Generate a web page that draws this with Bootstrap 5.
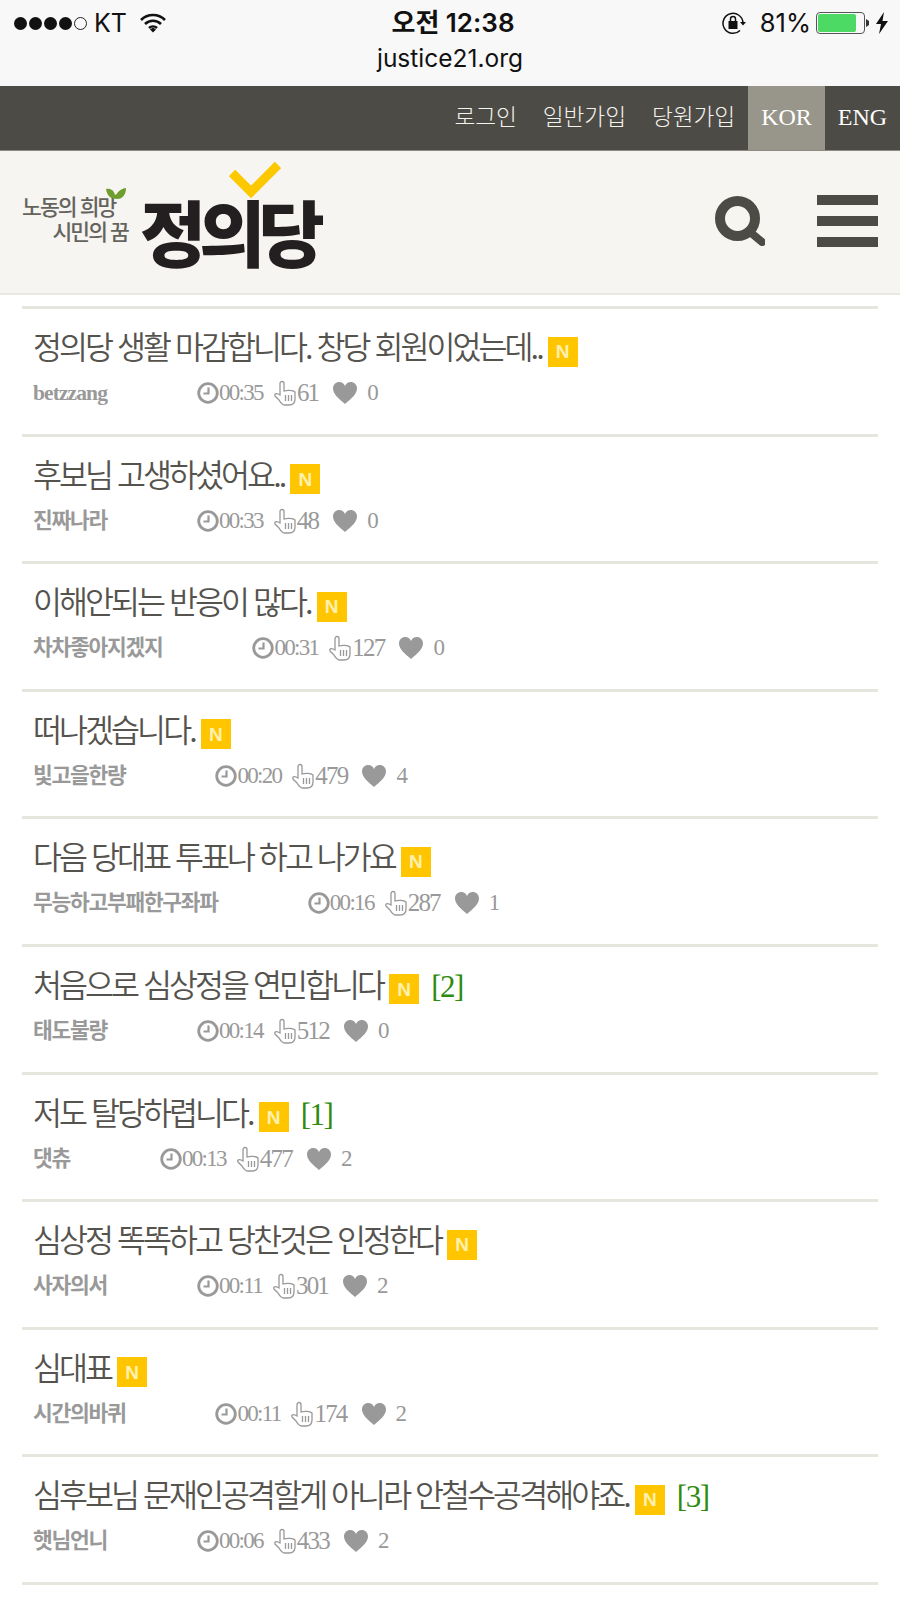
<!DOCTYPE html>
<html lang="ko">
<head>
<meta charset="utf-8">
<title>정의당</title>
<link href="https://cdn.jsdelivr.net/npm/bootstrap@5.3.0/dist/css/bootstrap.min.css" rel="stylesheet">
<style>
body{background:#fff;font-family:"Noto Sans CJK KR",sans-serif;overflow:hidden}
.phone-bar{height:86px;background:#f8f8f8;color:#111;font-family:Inter,"Noto Sans CJK KR",sans-serif}
.status-row{height:46px;padding:0 12px 0 14px}
.status-side{width:320px}
.sig-dots{gap:2px;margin-right:7px}
.sig-dot{width:13px;height:13px;border-radius:50%;background:#111;display:block}
.sig-dot.empty{background:none;border:1px solid #222}
.carrier{font-size:25px;line-height:1}
.wifi-ic{margin-left:13px}
.clock-now{font-size:26px;font-weight:600;line-height:1;margin-left:4px}
.pct{font-size:25.500px;line-height:1;margin-right:5px}
.lock-ic{margin-right:13px}
.url-line{font-size:24.500px;line-height:28px;text-align:center;margin-top:-2px}
.batt{width:49px;height:22px;border:1px solid #555;border-radius:4px;padding:1px;display:block}
.batt-fill{display:block;height:100%;background:#4cd964;border-radius:2px}
.batt-nub{margin:0 7px 0 1px}
.util-bar{height:65px;background:#4d4b45;border-bottom:1px solid #8d8b80}
.util-link{color:#f4f3ee;font-size:22.700px;font-weight:300;text-decoration:none;letter-spacing:-.1px;padding:0 13px;line-height:60px}
.lang-link{color:#fff;font-family:"Liberation Serif",serif;font-size:24px;text-decoration:none;width:75px;text-align:center;line-height:62px}
.lang-link.on{background:#98968a;width:77px}
.site-head{height:144px;background:#f6f5f1;border-bottom:2px solid #e9e8e3;padding:0 22px}
.logo-box{position:relative;width:310px;height:142px}
.logo-tag{width:106px;color:#65635d;font-family:"Liberation Sans","Noto Sans CJK KR",sans-serif;font-size:21.500px;line-height:25px;font-weight:500;letter-spacing:-1.900px;white-space:nowrap;margin-top:-2px}
.logo-tag span{display:block}
.logo-tag span+span{text-align:right}
.logo-name{color:#231f20;font-size:72px;line-height:80px;font-weight:900;letter-spacing:-7px;white-space:nowrap;margin:16px 0 0 12px}
.logo-check{position:absolute;left:207px;top:10px}
.logo-leaf{position:absolute;left:83px;top:36px}
.head-tools{gap:52px;margin-top:-3px}
.post-list{padding:11px 22px 0;border-radius:0}
.post-list .post-row{display:block;height:127.6px;border:0;border-top:3px solid #e6e6df;border-radius:0;padding:14px 11px 0;background:#fff}
.post-list .post-row.list-end{height:3px;padding:0}
.post-title{height:44px;font-size:31.500px;line-height:44px;letter-spacing:-2.950px;color:#55534e;font-weight:350;white-space:nowrap}
.new-tag{display:inline-flex;align-items:center;justify-content:center;width:30px;height:30px;background:#ffc600;color:#fff0b0;font:700 19px/1 "Liberation Sans",sans-serif;vertical-align:1px;margin-left:6px;letter-spacing:0}
.reply-count{color:#2e8b0e;font-family:"Liberation Serif",serif;font-size:31px;line-height:1;letter-spacing:-1.500px;margin-left:12px}
.post-meta{color:#999;font-family:"Liberation Serif","Noto Sans CJK KR",serif;font-size:23px;line-height:30px;margin-top:11px;white-space:nowrap}
.post-author{font-weight:700;letter-spacing:-1.300px;margin-right:90px;font-size:21.500px}
.post-author.latin-name{letter-spacing:-.9px}
.meta-time{letter-spacing:-1.700px}
.meta-hits{font-size:25px;letter-spacing:-1.800px}
.meta-icon{flex:none}
.hand-ic{margin-left:10px}
.heart-ic{margin-left:14px}
.meta-likes{margin-left:9px}
</style>
</head>
<body>
<header class="phone-bar">
  <div class="status-row d-flex align-items-center justify-content-between">
    <div class="status-side d-flex align-items-center">
      <span class="sig-dots d-flex align-items-center"><i class="sig-dot"></i><i class="sig-dot"></i><i class="sig-dot"></i><i class="sig-dot"></i><i class="sig-dot empty"></i></span>
      <span class="carrier">KT</span>
      <svg class="wifi-ic" width="26" height="20" viewBox="0 0 26 20"><path d="M1 7a17 17 0 0 1 24 0M5 11a11.500 11.500 0 0 1 16 0M9 15a6 6 0 0 1 8 0" fill="none" stroke="#111" stroke-width="2.600"/><path d="M10 16.500l3-2 3 2-3 3z" fill="#111"/></svg>
    </div>
    <div class="clock-now">오전 12:38</div>
    <div class="status-side d-flex align-items-center justify-content-end">
      <svg class="lock-ic" width="26" height="24" viewBox="0 0 26 24"><path d="M22 12a10 10 0 1 0-3 7.500" fill="none" stroke="#111" stroke-width="1.500"/><path d="M19 11h6l-3 3.500z" fill="#111"/><rect x="7.500" y="10" width="9" height="8" fill="#111"/><path d="M9.500 10V8a2.500 2.500 0 0 1 5 0v2" fill="none" stroke="#111" stroke-width="1.500"/></svg>
      <span class="pct">81%</span>
      <span class="batt"><span class="batt-fill" style="width:84%"></span></span>
      <svg class="batt-nub" width="3" height="8" viewBox="0 0 3 8"><path d="M0 0l3 2v4l-3 2z" fill="#333"/></svg>
      <svg width="12" height="22" viewBox="0 0 12 22"><path d="M8 0L0 12h5l-2 10 9-13H6.500z" fill="#111"/></svg>
    </div>
  </div>
  <div class="url-line">justice21.org</div>
</header>

<nav class="util-bar d-flex justify-content-end align-items-stretch">
  <a class="util-link" href="#">로그인</a>
  <a class="util-link" href="#">일반가입</a>
  <a class="util-link" href="#">당원가입</a>
  <a class="lang-link on" href="#">KOR</a>
  <a class="lang-link" href="#">ENG</a>
</nav>

<div class="site-head navbar flex-nowrap d-flex align-items-center justify-content-between">
  <a class="logo-box d-flex align-items-center text-decoration-none" href="#">
    <span class="logo-tag"><span>노동의 희망</span><span>시민의 꿈</span></span>
    <span class="logo-name">정의당</span>
    <svg class="logo-leaf" width="22" height="14" viewBox="0 0 22 14"><path d="M1 2c4-1 8 1 9 6 3-1 3-6 11-7 0 6-3 11-9 11C6 12 2 9 1 2z" fill="#6f9e2e"/></svg>
    <svg class="logo-check" width="52" height="38" viewBox="0 0 52 38"><path d="M3 12l19 19L49 4" fill="none" stroke="#fcc800" stroke-width="9"/></svg>
  </a>
  <div class="head-tools d-flex align-items-center">
    <svg width="50" height="50" viewBox="0 0 50 50"><circle cx="22.500" cy="22.500" r="17.500" fill="none" stroke="#4d4b45" stroke-width="10"/><path d="M35 36l12 10" stroke="#4d4b45" stroke-width="8" stroke-linecap="round"/></svg>
    <svg width="61" height="52" viewBox="0 0 61 52"><path d="M0 0h61v10H0zM0 21h61v10H0zM0 42h61v10H0z" fill="#4d4b45"/></svg>
  </div>
</div>

<svg width="0" height="0" class="position-absolute">
  <symbol id="ic-clock" viewBox="0 0 22 22"><circle cx="11" cy="11" r="9.300" fill="none" stroke="#999" stroke-width="2.800"/><path d="M11.500 5.500v6H6.500" fill="none" stroke="#999" stroke-width="2.200"/></symbol>
  <symbol id="ic-hand" viewBox="0 0 24 26"><path d="M7 15V3.500a2 2 0 0 1 4 0V11c3-1 9-1 11 1v7c0 4-2 6-6 6h-4c-3 0-4-2-6-5l-4-4c-1-2 1-3 3-2z" fill="#fff" stroke="#999" stroke-width="1.300"/><path d="M12.500 15v6M15.500 15v6M18.500 15v6" stroke="#999" stroke-width="1.300"/></symbol>
  <symbol id="ic-heart" viewBox="0 0 26 24"><path d="M13 23C7 18 1 13 1 7.500 1 3.500 4 1 7.300 1 9.800 1 12 2.500 13 5c1-2.500 3.200-4 5.700-4C22 1 25 3.500 25 7.500 25 13 19 18 13 23z" fill="#999"/></symbol>
</svg>

<div class="post-list list-group list-group-flush">
  <div class="post-row list-group-item">
    <div class="post-title">정의당 생활 마감합니다. 창당 회원이었는데..<span class="new-tag">N</span></div>
    <div class="post-meta d-flex align-items-center"><span class="post-author latin-name">betzzang</span><svg class="meta-icon" width="22" height="22"><use href="#ic-clock"/></svg><span class="meta-time">00:35</span><svg class="meta-icon hand-ic" width="24" height="26"><use href="#ic-hand"/></svg><span class="meta-hits">61</span><svg class="meta-icon heart-ic" width="26" height="24"><use href="#ic-heart"/></svg><span class="meta-likes">0</span></div>
  </div>
  <div class="post-row list-group-item">
    <div class="post-title">후보님 고생하셨어요..<span class="new-tag">N</span></div>
    <div class="post-meta d-flex align-items-center"><span class="post-author">진짜나라</span><svg class="meta-icon" width="22" height="22"><use href="#ic-clock"/></svg><span class="meta-time">00:33</span><svg class="meta-icon hand-ic" width="24" height="26"><use href="#ic-hand"/></svg><span class="meta-hits">48</span><svg class="meta-icon heart-ic" width="26" height="24"><use href="#ic-heart"/></svg><span class="meta-likes">0</span></div>
  </div>
  <div class="post-row list-group-item">
    <div class="post-title">이해안되는 반응이 많다.<span class="new-tag">N</span></div>
    <div class="post-meta d-flex align-items-center"><span class="post-author">차차좋아지겠지</span><svg class="meta-icon" width="22" height="22"><use href="#ic-clock"/></svg><span class="meta-time">00:31</span><svg class="meta-icon hand-ic" width="24" height="26"><use href="#ic-hand"/></svg><span class="meta-hits">127</span><svg class="meta-icon heart-ic" width="26" height="24"><use href="#ic-heart"/></svg><span class="meta-likes">0</span></div>
  </div>
  <div class="post-row list-group-item">
    <div class="post-title">떠나겠습니다.<span class="new-tag">N</span></div>
    <div class="post-meta d-flex align-items-center"><span class="post-author">빛고을한량</span><svg class="meta-icon" width="22" height="22"><use href="#ic-clock"/></svg><span class="meta-time">00:20</span><svg class="meta-icon hand-ic" width="24" height="26"><use href="#ic-hand"/></svg><span class="meta-hits">479</span><svg class="meta-icon heart-ic" width="26" height="24"><use href="#ic-heart"/></svg><span class="meta-likes">4</span></div>
  </div>
  <div class="post-row list-group-item">
    <div class="post-title">다음 당대표 투표나 하고 나가요<span class="new-tag">N</span></div>
    <div class="post-meta d-flex align-items-center"><span class="post-author">무능하고부패한구좌파</span><svg class="meta-icon" width="22" height="22"><use href="#ic-clock"/></svg><span class="meta-time">00:16</span><svg class="meta-icon hand-ic" width="24" height="26"><use href="#ic-hand"/></svg><span class="meta-hits">287</span><svg class="meta-icon heart-ic" width="26" height="24"><use href="#ic-heart"/></svg><span class="meta-likes">1</span></div>
  </div>
  <div class="post-row list-group-item">
    <div class="post-title">처음으로 심상정을 연민합니다<span class="new-tag">N</span><span class="reply-count">[2]</span></div>
    <div class="post-meta d-flex align-items-center"><span class="post-author">태도불량</span><svg class="meta-icon" width="22" height="22"><use href="#ic-clock"/></svg><span class="meta-time">00:14</span><svg class="meta-icon hand-ic" width="24" height="26"><use href="#ic-hand"/></svg><span class="meta-hits">512</span><svg class="meta-icon heart-ic" width="26" height="24"><use href="#ic-heart"/></svg><span class="meta-likes">0</span></div>
  </div>
  <div class="post-row list-group-item">
    <div class="post-title">저도 탈당하렵니다.<span class="new-tag">N</span><span class="reply-count">[1]</span></div>
    <div class="post-meta d-flex align-items-center"><span class="post-author">댓츄</span><svg class="meta-icon" width="22" height="22"><use href="#ic-clock"/></svg><span class="meta-time">00:13</span><svg class="meta-icon hand-ic" width="24" height="26"><use href="#ic-hand"/></svg><span class="meta-hits">477</span><svg class="meta-icon heart-ic" width="26" height="24"><use href="#ic-heart"/></svg><span class="meta-likes">2</span></div>
  </div>
  <div class="post-row list-group-item">
    <div class="post-title">심상정 똑똑하고 당찬것은 인정한다<span class="new-tag">N</span></div>
    <div class="post-meta d-flex align-items-center"><span class="post-author">사자의서</span><svg class="meta-icon" width="22" height="22"><use href="#ic-clock"/></svg><span class="meta-time">00:11</span><svg class="meta-icon hand-ic" width="24" height="26"><use href="#ic-hand"/></svg><span class="meta-hits">301</span><svg class="meta-icon heart-ic" width="26" height="24"><use href="#ic-heart"/></svg><span class="meta-likes">2</span></div>
  </div>
  <div class="post-row list-group-item">
    <div class="post-title">심대표<span class="new-tag">N</span></div>
    <div class="post-meta d-flex align-items-center"><span class="post-author">시간의바퀴</span><svg class="meta-icon" width="22" height="22"><use href="#ic-clock"/></svg><span class="meta-time">00:11</span><svg class="meta-icon hand-ic" width="24" height="26"><use href="#ic-hand"/></svg><span class="meta-hits">174</span><svg class="meta-icon heart-ic" width="26" height="24"><use href="#ic-heart"/></svg><span class="meta-likes">2</span></div>
  </div>
  <div class="post-row list-group-item">
    <div class="post-title">심후보님 문재인공격할게 아니라 안철수공격해야죠.<span class="new-tag">N</span><span class="reply-count">[3]</span></div>
    <div class="post-meta d-flex align-items-center"><span class="post-author">햇님언니</span><svg class="meta-icon" width="22" height="22"><use href="#ic-clock"/></svg><span class="meta-time">00:06</span><svg class="meta-icon hand-ic" width="24" height="26"><use href="#ic-hand"/></svg><span class="meta-hits">433</span><svg class="meta-icon heart-ic" width="26" height="24"><use href="#ic-heart"/></svg><span class="meta-likes">2</span></div>
  </div>
  <div class="post-row list-end list-group-item"></div>
</div>
<script src="https://cdn.jsdelivr.net/npm/bootstrap@5.3.0/dist/js/bootstrap.bundle.min.js"></script>
</body>
</html>
